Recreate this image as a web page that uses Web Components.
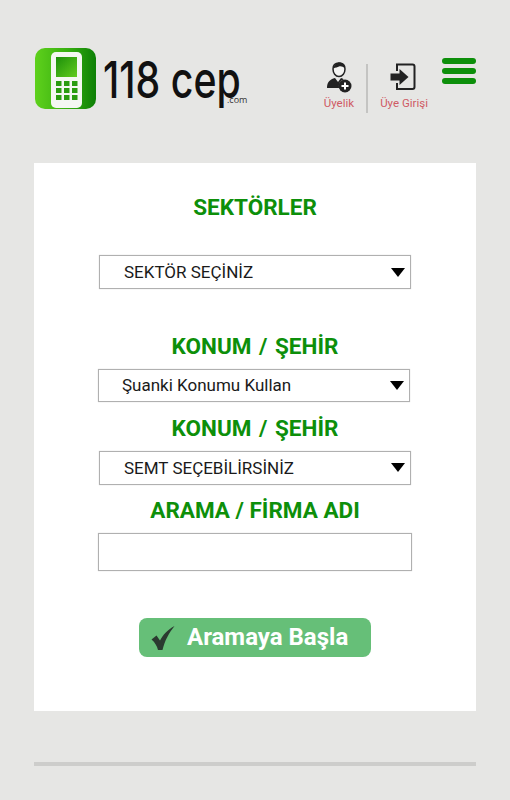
<!DOCTYPE html>
<html lang="tr">
<head>
<meta charset="utf-8">
<title>118 cep</title>
<style>
  html, body { margin: 0; padding: 0; background: #e6e6e4; }
  body { font-family: Roboto, "Liberation Sans", sans-serif; height: 800px; overflow: hidden; }
</style>
</head>
<body>
<site-page>
  <site-header slot="header"></site-header>
  <search-form></search-form>
</site-page>

<script>
class SitePage extends HTMLElement {
  constructor() {
    super();
    this.attachShadow({ mode: 'open' });
    this.shadowRoot.innerHTML = `
      <style>
        :host { display: block; padding: 48px 34px 0; }
        .rule { height: 4px; background: #cdcdcb; margin-top: 51px; }
      </style>
      <slot name="header"></slot>
      <slot></slot>
      <div class="rule"></div>
    `;
  }
}

class SiteHeader extends HTMLElement {
  constructor() {
    super();
    this.attachShadow({ mode: 'open' });
    this.shadowRoot.innerHTML = `
      <style>
        :host { display: flex; height: 115px; align-items: flex-start; }
        .logo { display: flex; align-items: flex-start; margin-left: 1px; }
        .word { position: relative; width: 140px; margin-left: 6px; margin-top: 4px; font: 500 51px/56px Inter, sans-serif; color: #111; white-space: nowrap; }
        .word span { display: inline-block; transform: scaleX(0.77); transform-origin: left center; }
        .word small { position: absolute; left: 124px; top: 43px; font: 400 9px/10px "Open Sans", sans-serif; color: #333; }
        .links { margin-left: auto; display: flex; align-items: flex-start; margin-top: 13px; }
        .link { display: flex; flex-direction: column; align-items: center; font-size: 11.5px; line-height: 13px; color: #cf5a64; }
        .link svg { display: block; margin-bottom: 4px; }
        .link svg.door { margin-right: 3px; }
        .sep { width: 2px; height: 49px; margin: 3px 12px 0 12px; background: #c4c4c2; }
        .burger { margin: -3px 0 0 14px; display: flex; flex-direction: column; gap: 4px; }
        .burger i { display: block; width: 34px; height: 6px; border-radius: 3px; background: #0d8f0a; }
      </style>
      <div class="logo">
        <svg width="62" height="62" viewBox="0 0 62 62">
          <defs>
            <linearGradient id="tile" x1="0" x2="1" y1="0" y2="0">
              <stop offset="0" stop-color="#5fd11c"/><stop offset="0.55" stop-color="#36ae10"/><stop offset="1" stop-color="#0d7f06"/>
            </linearGradient>
            <linearGradient id="lcd" x1="0" x2="1" y1="0" y2="1">
              <stop offset="0" stop-color="#1c8f0a"/><stop offset="1" stop-color="#63cc1e"/>
            </linearGradient>
          </defs>
          <rect x="0" y="0" width="61" height="61" rx="10" fill="url(#tile)"/>
          <rect x="16" y="4" width="31" height="56" rx="5" fill="#f4f7f2"/>
          <rect x="21" y="9" width="21" height="20" fill="url(#lcd)"/>
          <g fill="#2a9c10">
            <rect x="21" y="33" width="5.500" height="5"/><rect x="29" y="33" width="5.500" height="5"/><rect x="37" y="33" width="5.500" height="5"/>
            <rect x="21" y="40" width="5.500" height="5"/><rect x="29" y="40" width="5.500" height="5"/><rect x="37" y="40" width="5.500" height="5"/>
            <rect x="21" y="47" width="5.500" height="5"/><rect x="29" y="47" width="5.500" height="5"/><rect x="37" y="47" width="5.500" height="5"/>
          </g>
        </svg>
        <div class="word"><span>118 cep</span><small>.com</small></div>
      </div>
      <div class="links">
        <div class="link">
          <svg width="26" height="32" viewBox="0 0 26 32">
            <path d="M13 2c-4 0-6 2.400-6 6 0 3.800 2.400 7.500 6 7.500s6-3.700 6-7.500c0-3.600-2-6-6-6z" fill="#f4f4f2" stroke="#222" stroke-width="1.500"/>
            <path d="M7.500 7.500C8 3.500 10.500 1.500 13.500 1.500s5.500 2 5.500 6c-2-2-4.500-2.800-6-2-1.500.7-3.500 1-5.500 2z" fill="#222"/>
            <path d="M1 27c0-6 3-8.500 8-10l3 4 3-4c1 .3 2 .7 2.800 1.200A8 8 0 0 0 13 27z" fill="#222"/>
            <circle cx="19" cy="25" r="6.500" fill="#222"/>
            <path d="M19 21.500v7M15.500 25h7" stroke="#fff" stroke-width="2"/>
          </svg>
          <span>Üyelik</span>
        </div>
        <div class="sep"></div>
        <div class="link">
          <svg class="door" width="26" height="32" viewBox="0 0 26 32">
            <path d="M7 10V3.500h15.500a2 2 0 0 1 2 2V26a2 2 0 0 1-2 2H7v-6" fill="none" stroke="#222" stroke-width="2"/>
            <path d="M0.500 12.500h9V8l9 8-9 8v-4.500h-9z" fill="#222"/>
          </svg>
          <span>Üye Girişi</span>
        </div>
        <div class="burger"><i></i><i></i><i></i></div>
      </div>
    `;
  }
}

class FieldTitle extends HTMLElement {
  constructor() {
    super();
    this.attachShadow({ mode: 'open' });
    this.shadowRoot.innerHTML = `
      <style>
        :host { display: block; padding-bottom: 2px; text-align: center; color: #0d8f0a; font-weight: 700; font-size: 22.5px; line-height: 24px; }
      </style>
      <slot></slot>
    `;
  }
}

class FakeSelect extends HTMLElement {
  constructor() {
    super();
    this.attachShadow({ mode: 'open' });
    this.shadowRoot.innerHTML = `
      <style>
        :host { display: flex; box-sizing: border-box; width: 312px; height: 34px; align-items: center; padding: 0 5px 0 24px; border: 1px solid #b0b0b0; box-shadow: 0 0 1px #ccc; background: #fff; color: #1a1a1a; font-size: 17px; }
        span { flex: 1; }
        i { width: 0; height: 0; border-left: 7px solid transparent; border-right: 7px solid transparent; border-top: 9px solid #000; }
      </style>
      <span><slot></slot></span><i></i>
    `;
  }
}

class SearchForm extends HTMLElement {
  constructor() {
    super();
    this.attachShadow({ mode: 'open' });
    this.shadowRoot.innerHTML = `
      <style>
        :host { display: block; box-sizing: border-box; height: 548px; padding-top: 32px; background: #fff; }
        .a { margin: 34px 0 0 65px; }
        .b { height: 33px; margin: 9px 0 0 64px; padding: 0 5px 1px 23px; }
        .t1 { margin-top: 45px; word-spacing: 2px; }
        .t2 { margin-top: 14px; word-spacing: 2px; }
        .t3 { margin-top: 13px; }
        .c { margin: 9px 0 0 65px; padding-bottom: 1px; }
        .input { box-sizing: border-box; width: 314px; height: 38px; margin: 9px 0 0 64px; border: 1px solid #b0b0b0; box-shadow: 0 0 1px #ccc; background: #fff; }
        .btn { display: flex; align-items: center; box-sizing: border-box; width: 232px; height: 39px; margin: 47px 0 0 105px; padding-left: 12px; border-radius: 8px; background: #66bf78; color: #fff; font-weight: 700; font-size: 24px; }
        .btn svg { margin-right: 12px; }
        .btn span { padding-bottom: 2px; }
      </style>
      <field-title>SEKTÖRLER</field-title>
      <fake-select class="a">SEKTÖR SEÇİNİZ</fake-select>
      <field-title class="t1">KONUM / ŞEHİR</field-title>
      <fake-select class="b">Şuanki Konumu Kullan</fake-select>
      <field-title class="t2">KONUM / ŞEHİR</field-title>
      <fake-select class="c">SEMT SEÇEBİLİRSİNİZ</fake-select>
      <field-title class="t3">ARAMA / FİRMA ADI</field-title>
      <div class="input"></div>
      <div class="btn">
        <svg width="24" height="26" viewBox="0 0 24 26"><path d="M0.500 14.500l5-4 3.500 5C12 10 16 5 23.500 1 18 8 14 15 11.500 25H7C6 21 4 17.500 0.500 14.500z" fill="#2b3a30"/></svg>
        <span>Aramaya Başla</span>
      </div>
    `;
  }
}

customElements.define('site-page', SitePage);
customElements.define('site-header', SiteHeader);
customElements.define('field-title', FieldTitle);
customElements.define('fake-select', FakeSelect);
customElements.define('search-form', SearchForm);
</script>
</body>
</html>
